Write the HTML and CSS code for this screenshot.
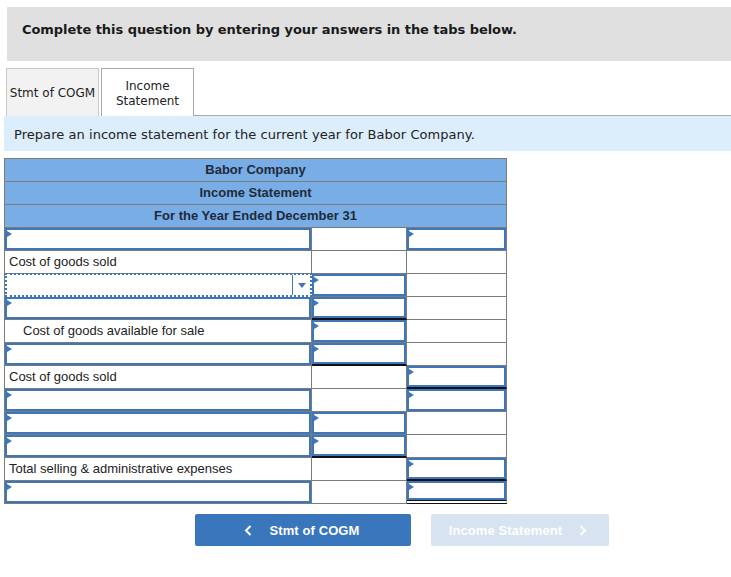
FILE: index.html
```html
<!DOCTYPE html>
<html>
<head>
<meta charset="utf-8">
<link rel="stylesheet" href="styles.css">
</head>
<body>
<div class="page">
  <div class="instructions">Complete this question by entering your answers in the tabs below.</div>
  <div class="tabs">
    <div class="tab tab-inactive">Stmt of COGM</div>
    <div class="tab tab-active">Income<br>Statement</div>
    <div class="tab-fill"></div>
  </div>
  <div class="prompt">Prepare an income statement for the current year for Babor Company.</div>

  <div class="sheet">
    <div class="hdr">Babor Company</div>
    <div class="hdr">Income Statement</div>
    <div class="hdr">For the Year Ended December 31</div>

    <!-- row 1 -->
    <div class="cell"><div class="inp"><span class="arr"></span></div></div>
    <div class="cell"></div>
    <div class="cell"><div class="inp"><span class="arr"></span></div></div>

    <!-- row 2 -->
    <div class="cell label">Cost of goods sold</div>
    <div class="cell"></div>
    <div class="cell"></div>

    <!-- row 3 -->
    <div class="cell dd-cell"><div class="dropdown"><span class="dd-btn"><span class="dd-tri"></span></span></div></div>
    <div class="cell"><div class="inp"><span class="arr"></span></div></div>
    <div class="cell"></div>

    <!-- row 4 -->
    <div class="cell"><div class="inp"><span class="arr"></span></div></div>
    <div class="cell ul"><div class="inp"><span class="arr"></span></div></div>
    <div class="cell"></div>

    <!-- row 5 -->
    <div class="cell label indent">Cost of goods available for sale</div>
    <div class="cell"><div class="inp"><span class="arr"></span></div></div>
    <div class="cell"></div>

    <!-- row 6 -->
    <div class="cell"><div class="inp"><span class="arr"></span></div></div>
    <div class="cell ul"><div class="inp"><span class="arr"></span></div></div>
    <div class="cell"></div>

    <!-- row 7 -->
    <div class="cell label">Cost of goods sold</div>
    <div class="cell"></div>
    <div class="cell ul"><div class="inp"><span class="arr"></span></div></div>

    <!-- row 8 -->
    <div class="cell"><div class="inp"><span class="arr"></span></div></div>
    <div class="cell"></div>
    <div class="cell"><div class="inp"><span class="arr"></span></div></div>

    <!-- row 9 -->
    <div class="cell"><div class="inp"><span class="arr"></span></div></div>
    <div class="cell"><div class="inp"><span class="arr"></span></div></div>
    <div class="cell"></div>

    <!-- row 10 -->
    <div class="cell"><div class="inp"><span class="arr"></span></div></div>
    <div class="cell ul"><div class="inp"><span class="arr"></span></div></div>
    <div class="cell"></div>

    <!-- row 11 -->
    <div class="cell label">Total selling &amp; administrative expenses</div>
    <div class="cell"></div>
    <div class="cell ul"><div class="inp"><span class="arr"></span></div></div>

    <!-- row 12 -->
    <div class="cell"><div class="inp"><span class="arr"></span></div></div>
    <div class="cell"></div>
    <div class="cell dul"><div class="inp"><span class="arr"></span></div></div>
  </div>

  <div class="nav">
    <div class="btn btn-prev">
      <svg width="8" height="11" viewBox="0 0 8 11"><polyline points="6.5,1 2,5.5 6.5,10" fill="none" stroke="#fff" stroke-width="2"/></svg>
      <span>Stmt of COGM</span>
    </div>
    <div class="btn btn-next">
      <span>Income Statement</span>
      <svg width="8" height="11" viewBox="0 0 8 11"><polyline points="1.5,1 6,5.5 1.5,10" fill="none" stroke="#fff" stroke-width="2"/></svg>
    </div>
  </div>
</div>
</body>
</html>
```

FILE: styles.css
```css
* { box-sizing: border-box; }
html, body { margin: 0; padding: 0; background: #fff; }
body { font-family: "DejaVu Sans", Verdana, sans-serif; color: #222; }

.page { padding-top: 7px; }

.instructions {
  margin-left: 7px;
  height: 54px;
  background: #e0e0e0;
  padding: 15px 0 0 15px;
  font-size: 13px;
  line-height: 16px;
  font-weight: bold;
  color: #1a1a1a;
  letter-spacing: -0.05px;
}

.tabs {
  display: flex;
  margin-top: 7px;
  padding-left: 6px;
  height: 48px;
}
.tab {
  height: 48px;
  display: flex;
  align-items: center;
  justify-content: center;
  text-align: center;
  font-size: 12px;
  line-height: 15px;
  color: #222;
  padding-top: 2px;
}
.tab-inactive {
  width: 93px;
  background: #f2f2f2;
  border: 1px solid #c8c8c8;
  border-bottom: none;
  margin-right: 2px;
}
.tab-active {
  width: 93px;
  background: #fff;
  border: 1px solid #a8a8a8;
  border-bottom: none;
}
.tab-fill {
  flex: 1;
  border-bottom: 1px solid #a8a8a8;
}

.prompt {
  margin-left: 4px;
  height: 35px;
  background: #dcedfb;
  padding: 11px 0 0 10px;
  font-size: 13px;
  line-height: 16px;
  color: #222;
  letter-spacing: 0.05px;
}

.sheet {
  margin: 7px 0 0 4px;
  display: grid;
  grid-template-columns: 307px 95px 100px;
  grid-auto-rows: 23px;
  width: 503px;
  border-left: 1px solid #7b7b7b;
  border-top: 1px solid #7b7b7b;
  font-family: "Liberation Sans", Arial, sans-serif;
  font-size: 13px;
}
.hdr {
  grid-column: 1 / span 3;
  background: #78ade5;
  border-right: 1px solid #7b7b7b;
  border-bottom: 1px solid #7b7b7b;
  text-align: center;
  font-weight: bold;
  line-height: 22px;
  color: #1f2a3a;
}
.cell {
  position: relative;
  border-right: 1px solid #7b7b7b;
  border-bottom: 1px solid #7b7b7b;
  background: #fff;
}
.cell.label {
  padding-left: 4px;
  line-height: 22px;
  color: #222;
  white-space: nowrap;
}
.cell.indent { padding-left: 18px; }
.cell.ul { border-bottom: 2px solid #111; }
.cell.dul { border-bottom: 4px double #111; }

.inp {
  position: relative;
  height: 100%;
  border: 2px solid #3e76ba;
}
.arr {
  position: absolute;
  left: 0;
  top: 1px;
  width: 0;
  height: 0;
  border-top: 3px solid transparent;
  border-bottom: 3px solid transparent;
  border-left: 5px solid #3e76ba;
}

.dd-cell { border-bottom-color: transparent; border-right-color: transparent; }
.dropdown {
  position: absolute;
  left: 0;
  top: -1px;
  right: -1px;
  bottom: -1px;
  border: 2px dotted #3e76ba;
}
.dd-btn {
  position: absolute;
  right: 0;
  top: 0;
  bottom: 0;
  width: 18px;
  border-left: 1px solid #3e76ba;
  display: flex;
  align-items: center;
  justify-content: center;
}
.dd-tri {
  width: 0;
  height: 0;
  border-left: 4px solid transparent;
  border-right: 4px solid transparent;
  border-top: 5px solid #3e76ba;
}

.nav {
  display: flex;
  gap: 20px;
  margin: 10px 0 0 195px;
}
.btn {
  height: 32px;
  border-radius: 2px;
  display: flex;
  align-items: center;
  justify-content: center;
  gap: 17px;
  font-family: "Liberation Sans", Arial, sans-serif;
  font-weight: bold;
  font-size: 13px;
  color: #fff;
  letter-spacing: 0.1px;
}
.btn-prev { width: 216px; background: #3a76bb; padding-right: 2px; }
.btn-next { width: 178px; background: #d7e3f1; padding-right: 4px; }
```
